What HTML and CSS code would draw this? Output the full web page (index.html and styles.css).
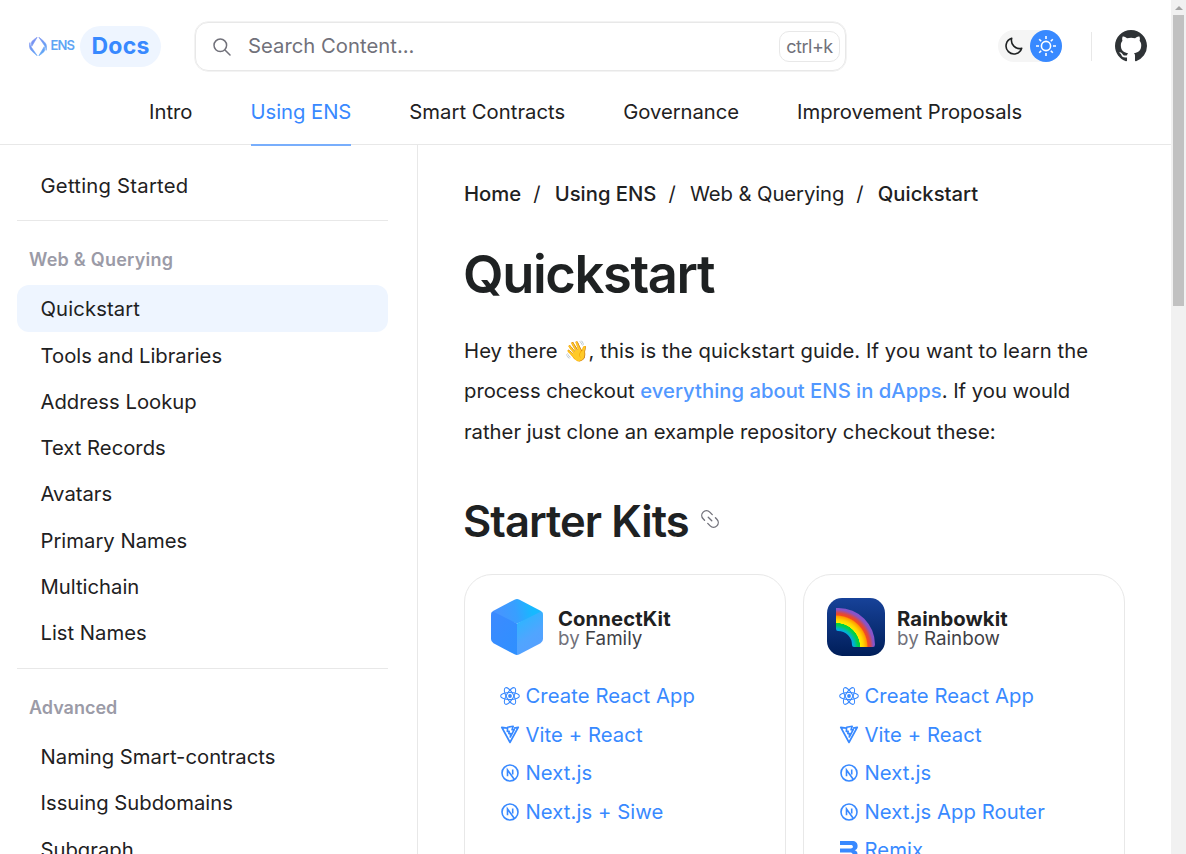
FILE: index.html
```html
<!DOCTYPE html>
<html lang="en">
<head>
<meta charset="utf-8">
<title>Quickstart | ENS Docs</title>
<link rel="stylesheet" href="styles.css">
</head>
<body>
<svg class="defs" width="0" height="0">
  <defs>
    <linearGradient id="ens" gradientUnits="userSpaceOnUse" x1="2" y1="0" x2="14" y2="19"><stop offset="0" stop-color="#7f8cf0"/><stop offset="1" stop-color="#5ca9f7"/></linearGradient>
    <linearGradient id="night" x1="0" y1="0" x2="0" y2="1"><stop offset="0" stop-color="#174299"/><stop offset="1" stop-color="#001e59"/></linearGradient>
    <radialGradient id="bow" gradientUnits="userSpaceOnUse" cx="9" cy="49" r="39">
      <stop offset=".4" stop-color="#00a5ff"/><stop offset=".48" stop-color="#01b8bb"/><stop offset=".57" stop-color="#02d043"/><stop offset=".61" stop-color="#02d043"/><stop offset=".62" stop-color="#ffee00"/><stop offset=".7" stop-color="#ffd400"/><stop offset=".79" stop-color="#ff9b00"/><stop offset=".82" stop-color="#f34a20"/><stop offset=".87" stop-color="#e0483c"/><stop offset=".96" stop-color="#8754c9"/><stop offset="1" stop-color="#8754c9"/>
    </radialGradient>
    <linearGradient id="cubeTop" x1="0" y1=".6" x2="1" y2=".5"><stop offset="0" stop-color="#4c91ff"/><stop offset=".48" stop-color="#389fff"/><stop offset=".8" stop-color="#16b9ff"/><stop offset="1" stop-color="#1cb7ff"/></linearGradient>
    <linearGradient id="cubeRight" x1=".2" y1="0" x2=".6" y2="1"><stop offset="0" stop-color="#25b9ff"/><stop offset=".6" stop-color="#50a5ff"/><stop offset="1" stop-color="#579fff"/></linearGradient>
    <linearGradient id="cubeLeft" x1="0" y1="0" x2="1" y2="1"><stop offset="0" stop-color="#3d8aff"/><stop offset="1" stop-color="#2e90ff"/></linearGradient>
    <clipPath id="hex"><path d="M23.5 1.2Q26 0 28.500 1.200L49.500 12.200Q52 13.600 52 16.500V40.500Q52 43.300 49.500 44.800L28.500 55.800Q26 57 23.500 55.800L2.500 44.800Q0 43.300 0 40.500V16.500Q0 13.600 2.500 12.200Z"/></clipPath>
    <symbol id="react" viewBox="0 0 20 20"><g fill="none" stroke="currentColor" stroke-width="1.050"><ellipse cx="10" cy="10" rx="9.400" ry="3.600"/><ellipse cx="10" cy="10" rx="9.400" ry="3.600" transform="rotate(60 10 10)"/><ellipse cx="10" cy="10" rx="9.400" ry="3.600" transform="rotate(120 10 10)"/></g><circle cx="10" cy="10" r="1.900" fill="currentColor"/></symbol>
    <symbol id="vite" viewBox="0 0 20 20"><g fill="none" stroke="currentColor" stroke-width="1.800" stroke-linejoin="round"><path d="M7 3.200L1.800 2.400 10 17.400 18.200 2.400 14 3.200"/><path d="M7.700 2.200L13.200 1.200 12 4.700 14.300 4.500 10.300 12 10.600 8.600H8.800L9.200 6.400H7.300Z" stroke-width="1.600"/></g></symbol>
    <symbol id="next" viewBox="0 0 20 20"><g fill="none" stroke="currentColor" stroke-width="1.600"><circle cx="10" cy="10" r="8"/><path d="M7.500 13.200V7L14.200 16.200M12.700 6.600V11.500"/></g></symbol>
    <symbol id="remix" viewBox="0 0 20 20"><path fill="currentColor" d="M1 0H13C16.800 0 18.600 2 18.600 5C18.600 7.500 17.300 8.800 15.600 9.200C17.500 9.600 18.400 10.800 18.500 12.800L18.800 19H13.700V14.200C13.700 12.500 13 11.500 11.300 11.500H1V7.500H11.800C13.200 7.500 13.900 7 13.900 5.800C13.900 4.500 13.200 4 11.800 4H1Z"/></symbol>
  </defs>
</svg>
<div class="shell">
  <div class="page">
    <header class="header">
      <div class="topbar">
        <a class="brand">
          <svg class="ens-mark" width="18" height="19" viewBox="0 0 18 19" fill="url(#ens)" stroke="url(#ens)" stroke-width=".6"><path d="M8.200.2L2.800 9.300Q1.800 7 2.600 5Q3.500 3.200 8.200.2Z"/><path d="M.9 5.600Q0 9 1 11.500Q1.700 13.600 8.200 18.700L2.200 10Q.8 8 .9 5.600Z"/><path d="M9.800.2Q16.300 5 17.100 7.500Q18 10 17.100 13.400Q17.200 11 15.800 9Z"/><path d="M15.200 9.700L9.800 18.800Q14.500 15.800 15.400 14Q16.200 12 15.200 9.700Z"/></svg>
          <span class="ens-word">ENS</span>
          <span class="docs">Docs</span>
        </a>
        <div class="search">
          <svg width="18" height="18" viewBox="0 0 18 18" fill="none" stroke="#71717a" stroke-width="1.500" stroke-linecap="round"><circle cx="7.300" cy="7.300" r="6.300"/><path d="M12 12L17 17"/></svg>
          <span class="placeholder">Search Content...</span>
          <kbd class="shortcut">ctrl+k</kbd>
        </div>
        <div class="tools">
          <div class="theme">
            <span class="moon"><svg width="18" height="18" viewBox="0 0 18 18" fill="none" stroke="#1e2122" stroke-width="1.600" stroke-linejoin="round"><path d="M6.700 1.300A8 8 0 1 0 16.700 11.300A8.200 8.200 0 0 1 6.700 1.300Z"/></svg></span>
            <span class="sun"><svg width="22" height="22" viewBox="0 0 22 22" fill="none" stroke="#fff" stroke-width="1.600"><circle cx="11" cy="11" r="4.600"/><path d="M11 1v3M11 18v3M1 11h3M18 11h3M4.200 4.200l2 2M15.800 15.800l2 2M4.200 17.800l2-2M15.800 6.200l2-2"/></svg></span>
          </div>
          <span class="divider"></span>
          <svg width="32" height="32" viewBox="0 0 16 16" fill="#2f3336"><path d="M8 0C3.580 0 0 3.580 0 8c0 3.540 2.290 6.530 5.470 7.590.4.070.55-.17.55-.38 0-.19-.01-.82-.01-1.490-2.010.37-2.530-.49-2.690-.94-.09-.23-.48-.94-.82-1.130-.28-.15-.68-.52-.01-.53.63-.01 1.080.58 1.230.82.72 1.210 1.870.87 2.330.66.07-.52.28-.87.510-1.070-1.780-.2-3.640-.89-3.640-3.950 0-.87.310-1.590.82-2.150-.08-.2-.36-1.020.08-2.120 0 0 .67-.21 2.200.82.64-.18 1.320-.27 2-.27s1.360.09 2 .27c1.530-1.040 2.200-.82 2.200-.82.44 1.100.16 1.920.08 2.120.51.56.82 1.270.82 2.150 0 3.070-1.870 3.750-3.650 3.950.29.25.54.73.54 1.480 0 1.070-.01 1.930-.01 2.200 0 .21.15.46.55.38A8.010 8.010 0 0 0 16 8c0-4.420-3.580-8-8-8z"/></svg>
        </div>
      </div>
      <nav class="tabs">
        <a class="loose">Intro</a><a class="active">Using ENS</a><a class="loose">Smart Contracts</a><a>Governance</a><a>Improvement Proposals</a>
      </nav>
    </header>
    <div class="body">
      <aside class="sidebar">
        <div class="group"><a class="looser">Getting Started</a></div>
        <div class="group">
          <h2 class="looser">Web &amp; Querying</h2>
          <a class="current loose">Quickstart</a><a>Tools and Libraries</a><a>Address Lookup</a><a>Text Records</a><a>Avatars</a><a>Primary Names</a><a>Multichain</a><a>List Names</a>
        </div>
        <div class="group">
          <h2>Advanced</h2>
          <a>Naming Smart-contracts</a><a>Issuing Subdomains</a><a>Subgraph</a>
        </div>
      </aside>
      <main class="content">
        <div class="crumbs"><b>Home</b><i>/</i><b>Using ENS</b><i>/</i><span>Web &amp; Querying</span><i>/</i><b>Quickstart</b></div>
        <h1>Quickstart</h1>
        <p class="intro"><span>Hey there 👋, this is the quickstart guide. If you want to learn the</span><br>process checkout <a>everything about ENS in dApps</a>. If you would<br>rather just clone an example repository checkout these:</p>
        <div class="section">
          <h2>Starter Kits</h2>
          <svg width="20" height="20" viewBox="0 0 20 20" fill="none" stroke="#71717a" stroke-width="1.350" stroke-linecap="round"><g transform="rotate(45 10 10)"><path d="M7 14.700H5A4.700 4.700 0 0 1 5 5.300H8.500M13 5.300H15A4.700 4.700 0 0 1 15 14.700H11.500M7.500 10H12.500"/></g></svg>
        </div>
        <div class="cards">
          <article class="card">
            <div class="kit">
              <svg width="58" height="58" viewBox="-3 -.5 58 58"><g clip-path="url(#hex)"><path fill="url(#cubeTop)" d="M0 0H52V16L26 25L0 16Z"/><path fill="url(#cubeLeft)" d="M0 12L26 25V57H0Z"/><path fill="url(#cubeRight)" d="M52 12L26 25V57H52Z"/></g></svg>
              <div class="kit-name"><strong>ConnectKit</strong><span>by <em>Family</em></span></div>
            </div>
            <ul class="links">
              <li><svg><use href="#react"/></svg>Create React App</li>
              <li><svg><use href="#vite"/></svg>Vite + React</li>
              <li><svg><use href="#next"/></svg>Next.js</li>
              <li><svg><use href="#next"/></svg>Next.js + Siwe</li>
            </ul>
          </article>
          <article class="card">
            <div class="kit">
              <svg width="58" height="58" viewBox="0 0 58 58"><rect width="58" height="58" rx="15" fill="url(#night)"/><path fill="url(#bow)" d="M11.500 10H9V31Q9 33 11 33A14 14 0 0 1 25 47Q25 49 27 49H46Q48 49 48 46.500A36.500 36.500 0 0 0 11.500 10Z"/></svg>
              <div class="kit-name"><strong>Rainbowkit</strong><span>by <em>Rainbow</em></span></div>
            </div>
            <ul class="links">
              <li><svg><use href="#react"/></svg>Create React App</li>
              <li><svg><use href="#vite"/></svg>Vite + React</li>
              <li><svg><use href="#next"/></svg>Next.js</li>
              <li><svg><use href="#next"/></svg>Next.js App Router</li>
              <li><svg><use href="#remix"/></svg>Remix</li>
            </ul>
          </article>
        </div>
      </main>
    </div>
  </div>
  <div class="scrollbar"><span class="arrow"></span><span class="thumb"></span></div>
</div>
</body>
</html>
```
FILE: styles.css
```css
* { box-sizing: border-box; }
body { margin: 0; height: 854px; overflow: hidden; background: #fff; color: #1e2122; font: 400 20.250px/1.5 Inter, sans-serif; letter-spacing: 0; }
h1, h2, p, ul { margin: 0; padding: 0; }
.defs { position: absolute; }
.shell { display: flex; height: 854px; overflow: hidden; }
.page { flex: 1; display: flex; flex-direction: column; min-width: 0; height: 854px; overflow: hidden; }
.header { flex: none; height: 145px; border-bottom: 1px solid #e8e8e8; }
.topbar { display: flex; align-items: center; height: 92px; padding: 0 24px 0 29px; }
.brand { display: flex; align-items: center; width: 166px; }
.ens-word { margin-left: 3.500px; width: 29.500px; font-size: 13px; font-weight: 600; letter-spacing: -.900px; color: #5fa5f4; }
.docs { width: 81px; height: 41px; border-radius: 21px; background: #eef5ff; color: #3889ff; font-size: 23px; font-weight: 700; line-height: 40px; text-align: center; letter-spacing: .2px; }
.search { display: flex; align-items: center; width: 651px; height: 49px; margin-top: 1px; padding: 0 5px 0 16.500px; border: 1.500px solid #e8e8e8; border-radius: 13px; box-shadow: 0 0 0 .500px #e8e8e8; color: #71717a; }
.placeholder { margin-left: 17.500px; line-height: 44px; padding-bottom: 2px; letter-spacing: .02px; }
.shortcut { margin-left: auto; width: 61px; height: 31px; border: 1px solid #e8e8e8; border-radius: 10px; font: 400 18px/30px Inter, sans-serif; letter-spacing: -.500px; text-align: center; }
.tools { display: flex; align-items: center; margin-left: auto; }
.theme { display: flex; width: 64px; height: 32px; border-radius: 16px; background: #f5f5f5; }
.moon, .sun { display: flex; align-items: center; justify-content: center; width: 32px; height: 32px; border-radius: 50%; }
.sun { background: #3889ff; }
.divider { width: 1px; height: 29px; margin: 0 23px 0 29px; background: #e8e8e8; }
.tabs { display: flex; justify-content: center; gap: 58px; height: 53px; }
.tabs a { height: 54px; line-height: 40px; white-space: nowrap; letter-spacing: -.04px; }
.tabs .loose { letter-spacing: .02px; }
.tabs .active { color: #3889ff; border-bottom: 2px solid #78aefc; }
.body { flex: 1; display: flex; min-height: 0; }
.sidebar { flex: none; width: 418px; padding: 17.700px 29px 0 17px; border-right: 1px solid #e8e8e8; overflow: hidden; }
.group { padding-bottom: 12px; }
.group:first-child { padding-bottom: 11px; }
.group + .group { border-top: 1px solid #e8e8e8; }
.group h2 { height: 64.300px; padding: 12px 12px 0; color: #9b9ba7; font-size: 18px; font-weight: 600; line-height: 53px; }
.group a { display: block; height: 46.300px; padding-left: 23.500px; border-radius: 12px; line-height: 47.400px; }
.group:first-child a { line-height: 46.300px; }
.group .current { background: #eef5ff; }
.loose { letter-spacing: .12px; }
.looser { letter-spacing: .24px; }
.content { flex: 1; padding: 34px 46px 0; min-width: 0; overflow: hidden; }
.crumbs { display: flex; height: 30px; white-space: nowrap; }
.crumbs b { font-weight: 500; }
.crumbs span { letter-spacing: -.08px; }
.crumbs i { width: 33.500px; padding-left: 12px; font-style: normal; }
h1 { margin-top: 26px; margin-left: -1px; font-size: 52.500px; font-weight: 600; line-height: 78px; letter-spacing: -1.400px; }
.intro { margin-top: 17.500px; line-height: 40.500px; white-space: nowrap; }
.intro span { letter-spacing: .08px; }
.intro a { color: #5298ff; font-weight: 500; }
.section { display: flex; align-items: center; gap: 12px; margin-top: 34.500px; height: 68px; }
.section h2 { margin-left: -1px; font-size: 43.500px; font-weight: 600; line-height: 68px; letter-spacing: -.950px; white-space: nowrap; }
.section svg { margin: 0 0 3px -1px; }
.cards { display: grid; grid-template-columns: 322px 322px; gap: 17px; margin-top: 19px; }
.card { height: 420px; padding: 23px; border: 1px solid #e8e8e8; border-radius: 28px; }
.kit { display: flex; align-items: center; gap: 12px; height: 58px; }
.kit-name { display: flex; flex-direction: column; padding-top: 5px; line-height: 20px; letter-spacing: .1px; }
.kit-name strong { font-weight: 700; }
.kit-name span { font-size: 18.800px; letter-spacing: 0; color: #71717a; }
.kit-name em { font-style: normal; color: #3f3f46; }
.links { margin-top: 21.500px; padding-left: 12px; list-style: none; color: #3889ff; letter-spacing: .08px; }
.links li { display: flex; align-items: center; gap: 5.500px; height: 38.600px; white-space: nowrap; }
.links svg { width: 20px; height: 20px; }
.scrollbar { width: 15px; background: #f1f1f1; display: flex; flex-direction: column; align-items: center; }
.arrow { margin: 6px 0 5px; border: 4px solid transparent; border-top: 0; border-bottom-color: #a3a3a3; }
.thumb { width: 11px; height: 291px; background: #c1c1c1; }
```
